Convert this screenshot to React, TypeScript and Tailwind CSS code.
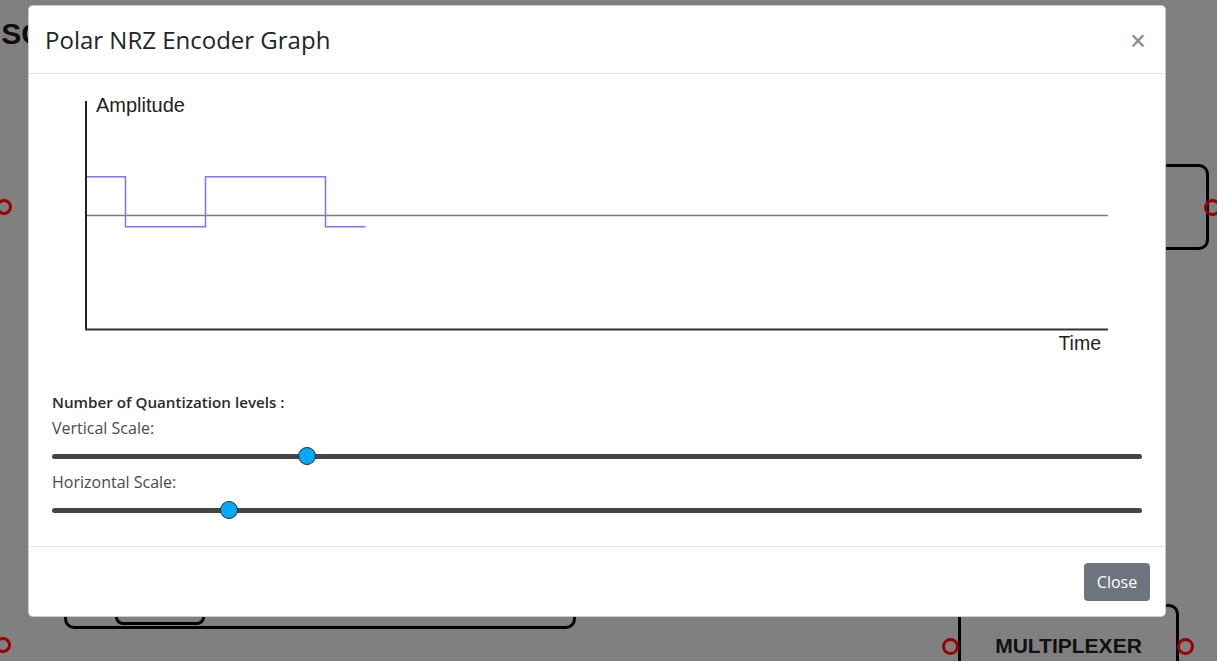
import React from "react";

const signal = "M57 102.7 H96.5 V152.7 H176.5 V102.7 H296.5 V152.7 H336.5";

function Slider({ label, value }: { label: string; value: number }) {
  return (
    <div>
      <p className="mt-[4px] h-[22px] text-[16px] leading-[22px] text-[#4a4a4a]">{label}</p>
      <div className="relative mt-[6px] flex h-[22px] items-center">
        <div className="h-[5px] w-full rounded-full bg-[#454545]" />
        <div
          className="absolute top-[2px] h-[18px] w-[18px] -translate-x-1/2 rounded-full border border-[#2a2a2a] bg-[#00aaff]"
          style={{ left: `${value}%` }}
        />
      </div>
    </div>
  );
}

export default function App() {
  return (
    <div className="relative h-[661px] w-full overflow-hidden bg-[#808080] font-['Open_Sans',sans-serif]">
      {/* diagram behind the backdrop */}
      <span className="absolute left-[-7px] top-[11px] font-['Liberation_Sans',Arial,sans-serif] text-[30px] font-bold text-[#0d0d12]">
        iSC
      </span>
      <div className="absolute left-[-4px] top-[199px] h-[16px] w-[16px] rounded-full border-[3px] border-[#990000]" />
      <div className="absolute left-[-5px] top-[637px] h-[16px] w-[16px] rounded-full border-[3px] border-[#990000]" />
      <div className="absolute left-[1120px] top-[164px] h-[86px] w-[89px] rounded-[10px] border-[3px] border-black" />
      <div className="absolute left-[1204px] top-[199px] h-[17px] w-[17px] rounded-full border-[3px] border-[#990000]" />
      <div className="absolute left-[64px] top-[560px] h-[69px] w-[512px] rounded-[10px] border-[3px] border-black" />
      <div className="absolute left-[115px] top-[580px] h-[45px] w-[90px] rounded-[8px] border-[3px] border-black" />
      <div className="absolute left-[958px] top-[604px] h-[80px] w-[221px] rounded-[10px] border-[3px] border-black">
        <p className="mt-[23px] text-center font-['Liberation_Sans',Arial,sans-serif] text-[21px] font-bold text-[#111]">
          MULTIPLEXER
        </p>
      </div>
      <div className="absolute left-[942px] top-[638px] h-[17px] w-[17px] rounded-full border-[3px] border-[#990000]" />
      <div className="absolute left-[1177px] top-[638px] h-[17px] w-[17px] rounded-full border-[3px] border-[#990000]" />

      {/* modal */}
      <div className="absolute left-[28px] top-[5px] flex h-[612px] w-[1138px] flex-col rounded-[5px] border border-black/20 bg-white">
        <div className="flex h-[68px] items-center justify-between border-b border-[#dee2e6] px-4">
          <h5 className="text-[24px] leading-[33px] text-[#212529]">Polar NRZ Encoder Graph</h5>
          <button type="button" className="mr-[3px] text-[28px] font-semibold leading-none text-black/45">
            ×
          </button>
        </div>

        <div className="flex-1">
          <svg width="1136" height="317" className="block">
            <line x1="57" y1="141.5" x2="1079" y2="141.5" stroke="#7a7a7a" strokeWidth="1.5" />
            <path d={signal} fill="none" stroke="#7878ff" strokeWidth="1.5" />
            <line x1="57" y1="27" x2="57" y2="256" stroke="#222" strokeWidth="2" />
            <line x1="56" y1="255.5" x2="1079" y2="255.5" stroke="#333" strokeWidth="2" />
            <text x="67" y="37.5" fontFamily="Liberation Sans, Arial, sans-serif" fontSize="20" fill="#222">
              Amplitude
            </text>
            <text x="1072" y="276" textAnchor="end" fontFamily="Liberation Sans, Arial, sans-serif" fontSize="19.5" fill="#222">
              Time
            </text>
          </svg>

          <div className="px-[23px]">
            <p className="h-[22px] text-[15.2px] font-semibold leading-[22px] text-[#2a2a2a]">
              Number of Quantization levels :
            </p>
            <Slider label="Vertical Scale:" value={23.4} />
            <Slider label="Horizontal Scale:" value={16.2} />
          </div>
        </div>

        <div className="flex h-[70px] items-center justify-end border-t border-[#dee2e6] pr-[15px]">
          <button
            type="button"
            className="h-[38px] w-[66px] rounded-[4px] bg-[#6c757d] text-[16px] text-white"
          >
            Close
          </button>
        </div>
      </div>
    </div>
  );
}
